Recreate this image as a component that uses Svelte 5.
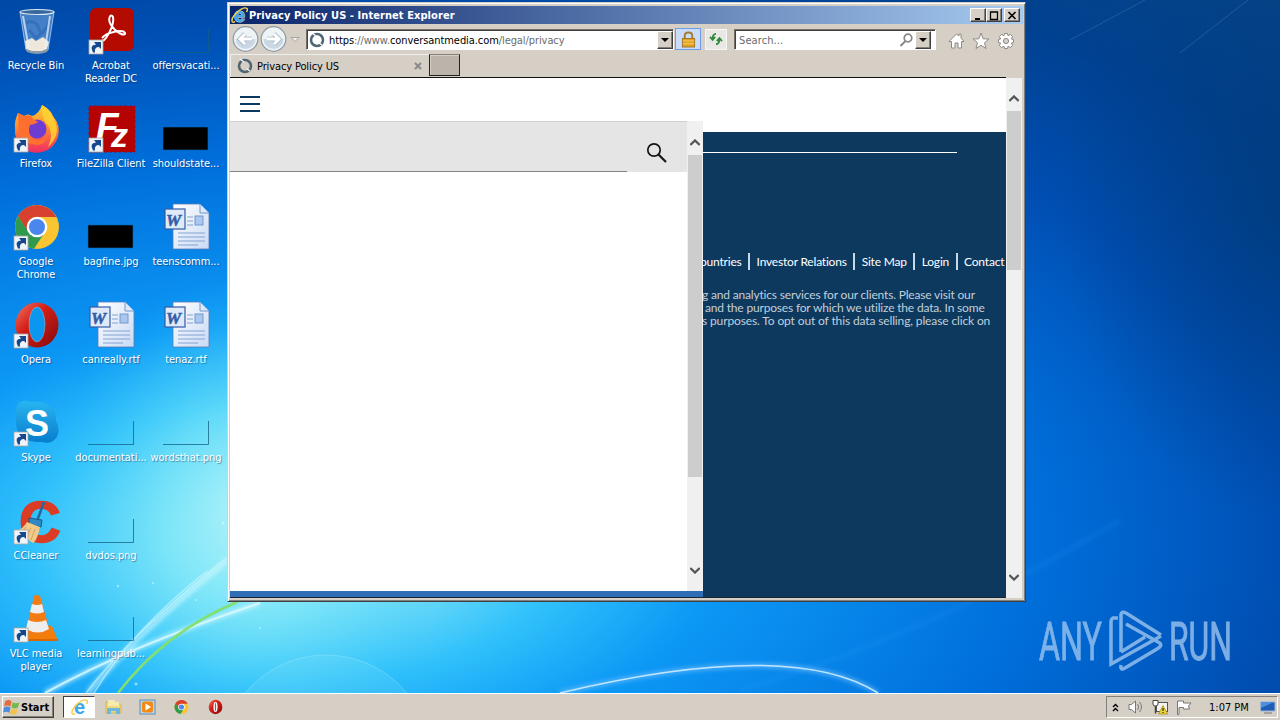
<script lang="ts">
	type Shortcut = { icon: string; label: string; link?: boolean };

	// Listed column by column, seven rows to a column
	const shortcuts: Shortcut[] = [
		{ icon: 'bin', label: 'Recycle Bin' },
		{ icon: 'firefox', label: 'Firefox', link: true },
		{ icon: 'chrome', label: 'Google Chrome', link: true },
		{ icon: 'opera', label: 'Opera', link: true },
		{ icon: 'skype', label: 'Skype', link: true },
		{ icon: 'ccleaner', label: 'CCleaner', link: true },
		{ icon: 'vlc', label: 'VLC media player', link: true },
		{ icon: 'acrobat', label: 'Acrobat Reader DC', link: true },
		{ icon: 'filezilla', label: 'FileZilla Client', link: true },
		{ icon: 'black', label: 'bagfine.jpg' },
		{ icon: 'word', label: 'canreally.rtf' },
		{ icon: 'empty', label: 'documentati...' },
		{ icon: 'empty', label: 'dvdos.png' },
		{ icon: 'empty', label: 'learningpub...' },
		{ icon: 'empty', label: 'offersvacati...' },
		{ icon: 'black', label: 'shouldstate...' },
		{ icon: 'word', label: 'teenscomm...' },
		{ icon: 'word', label: 'tenaz.rtf' },
		{ icon: 'empty', label: 'wordsthat.png' }
	];

	const footerLinks = ['ountries', 'Investor Relations', 'Site Map', 'Login', 'Contact'];

	let time = $state('1:07 PM');
</script>

{#snippet chrome()}
	<circle cx="25" cy="25" r="22" fill="#fbc531" />
	<path d="M25 25 L5.9 14 A22 22 0 0 1 44.5 15 L25 15 Z" fill="#d8402f" />
	<path d="M6 14 L16.5 31 L25 24 L25 15 Z" fill="#d8402f" />
	<path d="M6 14 A22 22 0 0 0 22 46.8 L33 30 L25 32 L16.5 30 Z" fill="#2f9a4d" />
	<circle cx="25" cy="25" r="10.3" fill="#fff" />
	<circle cx="25" cy="25" r="8" fill="#4a86ee" />
{/snippet}

{#snippet opera()}
	<ellipse cx="25" cy="25" rx="21.5" ry="22.5" fill="url(#red)" />
{/snippet}

{#snippet ie()}
	<text class="ie-letter" x="3" y="14.5">e</text>
	<path d="M4 14.500 C0 17 0 12 3.500 8 C7 3 14 -.5 16 1.500 C17 2.500 16 4 15.500 5" fill="none" stroke="#efd04f" stroke-width="1.500" />
{/snippet}

{#snippet icon(name: string)}
	{#if name === 'bin'}
		<path d="M8 6 L14 44 Q25 50 36 44 L42 6 Z" fill="#a9cdf0" fill-opacity=".4" stroke="#c8def4" stroke-opacity=".7" />
		<path d="M13 35 L20 32 L24 35 L31 31 L37 36 L35 43 Q25 48 14 43 Z" fill="#eee7da" />
		<path d="M14 17 Q24 13 27 23 T38 14 M17 24 L24 32 L34 23" fill="none" stroke="#2c65b4" stroke-width="3" opacity=".6" />
		<path d="M11 10 L17 43 M38 10 L33 43" stroke="#e8f4ff" stroke-width="2" opacity=".7" />
		<path d="M14 43 Q25 48 36 43 L35 46 Q25 50 15 46 Z" fill="#8b98a4" />
		<ellipse cx="25" cy="6" rx="17" ry="2.5" fill="#38689e" stroke="#dce8f2" stroke-width="1.200" />
	{:else if name === 'firefox'}
		<path d="M6 9 L12 12 Q16 9 20 12 Q27 10 30 1 Q39 6 41 12 L45 18 A22 22 0 1 1 3 24 Q2 18 6 9 Z" fill="url(#fire)" />
		<circle cx="25" cy="25" r="9.5" fill="#6f3cd1" />
		<path d="M6 9 L12 12 Q19 10 20 14 L26 18 Q22 21 18 21 Q15 28 20 34 Q29 40 36 30 Q35 39 26 41 Q12 41 7 30 Z" fill="#ff7030" />
		<path d="M30 1 Q38 5 42 15 Q50 30 36 43 Q42 31 36 21 Q29 16 30 1" fill="#ffd431" opacity=".85" />
	{:else if name === 'chrome'}
		{@render chrome()}
	{:else if name === 'opera'}
		{@render opera()}
		<ellipse cx="25" cy="24.500" rx="8" ry="17.500" fill="#0b96f0" stroke="#fff" stroke-opacity=".4" stroke-width=".7" />
	{:else if name === 'skype'}
		<path d="M4 15 C3 3 12 1 19 4 C34 2 45 9 44 23 C51 35 43 48 30 44 C14 45 4 38 4 24 Z" fill="url(#sky)" />
		<text class="skype-letter" x="13" y="37.5">S</text>
	{:else if name === 'ccleaner'}
		<text class="cc-letter" x="7" y="45.500">C</text>
		<path d="M32 6 L25 25" stroke="#2368a2" stroke-width="2.5" />
		<path d="M17 22 L30 24 L29 31 L17 28 Z" fill="#3189c4" stroke="#19598c" />
		<path d="M15 26 L28 31 Q25 45 21 47 L4 35 Q11 33 15 26" fill="#f3c988" />
		<path d="M14 31 L9 38 M19 32 L14 42 M23 33 L19 44" stroke="#c88d4f" stroke-width=".7" />
	{:else if name === 'vlc'}
		<path d="M15 32 H40 L46 47 H10 Z" fill="#f27d0b" />
		<path d="M10 45 H46 V47 H10 Z" fill="#da6504" />
		<path d="M22 2 Q25 0 28 2 L38 37 Q26 45 14 37 Z" fill="#f37b13" />
		<path d="M20 10 Q25 12 30 10 L32 18 Q25 21 18 18 Z M16 26 Q25 30 34 26 L37 35 Q26 42 14 35 Z" fill="#eee" />
	{:else if name === 'acrobat'}
		<rect x="3" y="2" width="44" height="43" rx="6" fill="#b30b00" />
		<path d="M14 34 C17 39 28 19 26 11 C24 7 20 12 24 19 C29 27 39 31 38 27 C36 23 20 26 15 32" fill="none" stroke="#fff" stroke-width="2" />
	{:else if name === 'filezilla'}
		<rect x="2" y="2" width="46" height="46" fill="#b50303" stroke="#951023" stroke-dasharray="3 2" />
		<text class="fz" x="9" y="35">F<tspan class="fz-z" x="24" y="43">z</tspan></text>
	{:else if name === 'black'}
		<path d="M1 23 H46 V46 H1 Z" fill="#000" stroke="#0a64b2" stroke-width=".6" />
	{:else if name === 'word'}
		<path d="M11 2 H38 L47 11 V47 H11 Z" fill="url(#paper)" stroke="#587cb8" stroke-width=".8" />
		<path d="M38 2 V11 H47" fill="#dce9fa" stroke="#7398cc" />
		<path d="M25 15 H31 M25 19 H31 M25 23 H31 M16 31 H43 M16 35 H43 M16 39 H43 M16 43 H36" stroke="#83a3d4" />
		<rect x="33" y="14" width="8" height="9" fill="#aac7ef" stroke="#7398cc" />
		<rect x="3" y="7" width="20" height="20" fill="#dfe9f8" stroke="#315da7" stroke-width="1.200" />
		<text class="word-letter" x="4" y="23.5">W</text>
	{:else}
		<path d="M1 46.5 H46.5 V23" fill="none" stroke="#145f83" stroke-opacity=".75" />
	{/if}
{/snippet}

{#snippet ring()}
	<svg class="ring" viewBox="0 0 16 16"><circle cx="8" cy="8" r="6" fill="none" stroke="#506773" stroke-width="2.600" /><path d="M3 1 L7 4 M13 13 L10 11" stroke="#fff" stroke-width="1.300" /></svg>
{/snippet}

{#snippet chevron(down: boolean)}
	<svg class="chevron" class:down viewBox="0 0 10 7"><path d="M.3 6 L5 1.500 L9.700 6" fill="none" stroke="#555" stroke-width="2.300" /></svg>
{/snippet}

<div class="screen">
	<main class="desktop">
		<svg class="wallpaper" viewBox="0 0 1280 693" preserveAspectRatio="none">
			<defs>
				<radialGradient id="sea" gradientUnits="userSpaceOnUse" cx="0" cy="0" r="1.500" gradientTransform="translate(300 540) scale(1000 520)">
					<stop offset="0" stop-color="#a6ebf7" />
					<stop offset=".08" stop-color="#80e2f8" />
					<stop offset=".18" stop-color="#30c1fb" />
					<stop offset=".28" stop-color="#0c98f5" />
					<stop offset=".49" stop-color="#006fdb" />
					<stop offset=".66" stop-color="#004eb2" />
					<stop offset=".82" stop-color="#004190" />
					<stop offset="1" stop-color="#084686" />
				</radialGradient>
				<radialGradient id="glow"><stop offset="0" stop-color="#b5f3f9" stop-opacity=".95" /><stop offset=".45" stop-color="#7ce8f8" stop-opacity=".6" /><stop offset="1" stop-color="#31c9fa" stop-opacity="0" /></radialGradient>
				<radialGradient id="shade"><stop offset="0" stop-color="#003a78" stop-opacity=".75" /><stop offset="1" stop-color="#003a80" stop-opacity="0" /></radialGradient>
				<linearGradient id="fire" x2="0" y2="1"><stop stop-color="#ffcf31" /><stop offset=".5" stop-color="#ff8432" /><stop offset="1" stop-color="#f02b67" /></linearGradient>
				<linearGradient id="red" x2="1" y2="1"><stop stop-color="#f17766" /><stop offset=".4" stop-color="#d51f16" /><stop offset="1" stop-color="#80090b" /></linearGradient>
				<linearGradient id="sky" x2="0" y2="1"><stop stop-color="#28b5f1" /><stop offset="1" stop-color="#087dcc" /></linearGradient>
				<linearGradient id="paper" x2="1" y2="1"><stop stop-color="#fff" /><stop offset="1" stop-color="#c9daf4" /></linearGradient>
				<filter id="soft"><feGaussianBlur stdDeviation="2" /></filter>
			</defs>
			<rect width="1280" height="693" fill="url(#sea)" />
			<ellipse cx="250" cy="515" rx="200" ry="240" fill="url(#glow)" />
			<ellipse cx="1290" cy="200" rx="230" ry="320" fill="url(#shade)" />
			<circle cx="326" cy="760" r="105" fill="#9ce8f8" fill-opacity=".15" stroke="#a8edfa" stroke-opacity=".35" />
			<g fill="none">
				<g filter="url(#soft)" stroke="#d9faff" stroke-width="5" opacity=".65">
					<path d="M45 693 Q130 646 260 603" />
					<path d="M88 693 Q135 635 228 560" />
					<path d="M560 693 Q790 638 878 693" stroke="#71bdff" />
				</g>
				<path d="M45 693 Q130 646 260 603" stroke="#d9faff" stroke-width="2" opacity=".8" />
				<path d="M86 693 Q130 635 228 557 M94 693 Q132 630 207 571" stroke="#c8f5fd" stroke-width="1.200" opacity=".7" />
				<path d="M118 693 Q165 632 237 602" stroke="#83df70" stroke-width="2.500" />
				<path d="M560 693 Q790 638 878 693" stroke="#bfe6ff" stroke-width="1.500" />
				<path d="M1180 53 L1248 0 M1070 40 L1145 0" stroke="#6c96bd" opacity=".3" />
				<path d="M740 690 Q930 635 1120 520" filter="url(#soft)" stroke="#41a7ff" stroke-width="5" opacity=".12" />
			</g>
			<g fill="#d8faff" opacity=".6"><circle cx="118" cy="586" r="1.200" /><circle cx="153" cy="583" r="1" /><circle cx="136" cy="684" r="1.500" /><circle cx="223" cy="523" r="1.500" /><circle cx="196" cy="600" r="1" /><circle cx="260" cy="628" r="1" /></g>
			<g class="watermark">
				<text x="1039" y="660" textLength="63" lengthAdjust="spacingAndGlyphs">ANY</text>
				<text x="1169" y="660" textLength="63" lengthAdjust="spacingAndGlyphs">RUN</text>
				<path d="M1121 652 V614 Q1122 611 1126 613 L1161 635 M1118 618 H1113 Q1111 619 1111 622 V664 L1120 659 L1161 636 M1126 624 L1158 642 Q1164 645 1157 649 L1125 668 Q1120 671 1121 665 M1121 652 L1145 637" />
			</g>
		</svg>

		<div class="shortcuts">
			{#each shortcuts as item}
				<div class="shortcut">
					<svg class="shortcut-icon" viewBox="0 0 48 48">
						{@render icon(item.icon)}
						{#if item.link}
							<rect x="2" y="34" width="14" height="14" fill="#eef4fb" stroke="#aaa6a0" stroke-width=".8" />
							<path d="M6 46.500 Q2 39 9 38.500 L7 36 H14 V43 L12 41 Q7 41 8 46.500 Z" fill="#16488b" />
						{/if}
					</svg>
					<span class="label">{item.label}</span>
				</div>
			{/each}
		</div>

		<section class="window">
			<header class="titlebar">
				<svg class="ie-icon" viewBox="0 0 17 16">{@render ie()}</svg>
				<span class="title">Privacy Policy US - Internet Explorer</span>
				<div class="caption">
					<button class="raised" aria-label="Minimize"><svg viewBox="0 0 12 11"><path d="M3 9 H8" stroke="#000" stroke-width="2" /></svg></button>
					<button class="raised" aria-label="Maximize"><svg viewBox="0 0 12 11"><path d="M2.500 2 H9.500 V9.500 H2.500 Z M2 2 H10" fill="none" stroke="#000" stroke-width="1.300" /></svg></button>
					<button class="raised close" aria-label="Close"><svg viewBox="0 0 12 11"><path d="M2.500 2 L9.500 9 M9.500 2 L2.500 9" stroke="#000" stroke-width="1.600" /></svg></button>
				</div>
			</header>

			<div class="toolbar">
				<svg class="nav" viewBox="0 0 72 28">
					<g fill="#eef3f6" stroke="#8f99a2" stroke-width="1.200"><circle cx="15.500" cy="14" r="12.300" /><circle cx="43.500" cy="14" r="12.300" /></g>
					<g fill="#c9d8e4"><path d="M5.500 14 A10 10 0 0 0 25.500 14 Z" /><path d="M33.500 14 A10 10 0 0 0 53.500 14 Z" /></g>
					<g fill="none" stroke="#a9b7c3" stroke-width="4.600"><path d="M22 14 H10 M15 9 L10 14 L15 19" /><path d="M37 14 H49 M44 9 L49 14 L44 19" /></g>
					<g fill="none" stroke="#fff" stroke-width="3"><path d="M22 14 H10 M15 9 L10 14 L15 19" /><path d="M37 14 H49 M44 9 L49 14 L44 19" /></g>
					<path d="M61 12.500 H69 L65 16.500 Z" fill="#eee" stroke="#aaa49c" />
				</svg>
				<div class="field address">
					{@render ring()}
					<span class="url"><b>https</b>://www.<b>conversantmedia.com</b>/legal/privacy</span>
					<button class="raised drop" aria-label="History"><i></i></button>
				</div>
				<div class="lock"><svg viewBox="0 0 16 18"><path d="M4 9 V5 Q4 1.500 8 1.500 T12 5 V9" fill="none" stroke="#a17c32" stroke-width="2" /><rect x="1.500" y="8" width="13" height="9" fill="#e4a323" stroke="#9e7421" /><path d="M2 10.500 H14 M2 13.500 H14" stroke="#f7ce64" /></svg></div>
				<div class="refresh"><svg viewBox="0 0 16 14"><path d="M8 1 Q4 1 4 7 M1 4.500 L4 8 L7 4.500 M8 13 Q12 13 12 7 M9 9.500 L12 6 L15 9.500" fill="none" stroke="#308a3c" stroke-width="2" /></svg></div>
				<div class="field search">
					<span>Search...</span>
					<svg viewBox="0 0 14 14"><circle cx="9" cy="5" r="3.800" fill="none" stroke="#888" stroke-width="1.700" /><path d="M6.500 8 L1.500 13" stroke="#888" stroke-width="2" /></svg>
					<button class="raised drop" aria-label="Search options"><i></i></button>
				</div>
				<svg class="tools" viewBox="0 0 66 18">
					<g fill="#fff" stroke="#8f8a84">
						<path d="M1 9.500 L8.500 2 L11 4 V2 H13 V6 L16 9.500 H13.500 V16 H10 V11 H7 V16 H3.500 V9.500 Z" />
						<path d="M33 1 L35.200 6.800 L41 7 L36.500 10.700 L38 16.500 L33 13.300 L28 16.500 L29.500 10.700 L25 7 L30.800 6.800 Z" />
						<path d="M56.500 1.500 H59.500 L60 3.700 L62.500 2.500 L64.600 4.600 L63.400 7 L65.500 7.500 V10.500 L63.400 11 L64.600 13.400 L62.500 15.500 L60 14.300 L59.500 16.500 H56.500 L56 14.300 L53.500 15.500 L51.400 13.400 L52.600 11 L50.500 10.500 V7.500 L52.600 7 L51.400 4.600 L53.500 2.500 L56 3.700 Z" />
						<circle cx="58" cy="9" r="2.600" fill="#d5cfc6" />
					</g>
				</svg>
			</div>

			<div class="tabs">
				<div class="tab">{@render ring()}<span>Privacy Policy US</span><svg class="tab-close" viewBox="0 0 8 8"><path d="M1 1 L7 7 M7 1 L1 7" stroke="#888" stroke-width="1.800" /></svg></div>
				<div class="new-tab"></div>
			</div>

			<div class="viewport">
				<div class="page">
					<div class="page-header"><svg viewBox="0 0 20 16"><path d="M0 1 H20 M0 8 H20 M0 15 H20" stroke="#0d395f" stroke-width="2" /></svg></div>
					<div class="columns">
						<div class="drawer">
							<div class="drawer-body">
								<div class="drawer-page">
									<div class="site-search">
										<div class="site-input"></div>
										<svg viewBox="0 0 22 22"><circle cx="8" cy="8" r="6.200" fill="none" stroke="#151515" stroke-width="1.700" /><path d="M12.500 12.500 L20 20" stroke="#151515" stroke-width="2.200" /></svg>
									</div>
								</div>
								<div class="scrollbar inner">{@render chevron(false)}<div class="thumb"></div>{@render chevron(true)}</div>
							</div>
							<div class="strip"></div>
						</div>
						<footer class="footer">
							<div class="rule"></div>
							<nav>
								{#each footerLinks as link}
									<span class="footer-link">{link}</span>
								{/each}
							</nav>
							<p><span class="l1">g and analytics services for our clients. Please visit our</span><span class="l2">and the purposes for which we utilize the data. In some</span><span class="l3">s purposes. To opt out of this data selling, please click on</span></p>
						</footer>
					</div>
				</div>
				<div class="scrollbar outer">{@render chevron(false)}<div class="thumb"></div>{@render chevron(true)}</div>
			</div>
		</section>
	</main>

	<div class="taskbar">
		<button class="raised start">
			<svg viewBox="0 0 16 15"><path d="M2 2 Q5 0 8 2 L7 7 Q4 5 1 7 Z" fill="#e56c3d" /><path d="M9 3 Q12 5 15.500 3 L14 8 Q11 10 8 8 Z" fill="#78b94b" /><path d="M1 8 Q4 6 7 8 L6 13 Q3 11 0 13 Z" fill="#4c8cda" /><path d="M8 9 Q11 11 14 9 L12.500 14 Q10 15.500 6.500 13.500 Z" fill="#f3c247" /></svg>
			Start
		</button>
		<div class="task active"><svg viewBox="0 0 17 16">{@render ie()}</svg></div>
		<div class="task"><svg viewBox="0 0 17 16"><path d="M1 3 H6 L8 5 H16 V14 H1 Z" fill="#efd77c" stroke="#c9a94d" stroke-width=".7" /><path d="M3 1 H9 L10 3 H14 V7 H3 Z" fill="#f7eaae" /><path d="M2 9 H15 V15 H11 V12 H6 V15 H2 Z" fill="#6db7dc" /></svg></div>
		<div class="task"><svg viewBox="0 0 17 16"><rect x="1" y="1" width="15" height="14" fill="#b9d9ef" stroke="#608bb5" /><rect x="3" y="2.500" width="11" height="11" rx="2" fill="#f28b15" /><path d="M6.500 4.500 L12 8 L6.500 11.500 Z" fill="#fff" /></svg></div>
		<div class="task"><svg viewBox="0 0 50 50">{@render chrome()}</svg></div>
		<div class="task"><svg viewBox="0 0 50 50">{@render opera()}<ellipse cx="25" cy="25" rx="6.500" ry="16" fill="#fff" /><ellipse cx="25" cy="25" rx="2" ry="13" fill="#d3463a" /></svg></div>
		<div class="tray">
			<svg class="more" viewBox="0 0 7 9"><path d="M1 4 L3.500 1.500 L6 4 M1 8 L3.500 5.500 L6 8" fill="none" stroke="#000" stroke-width="1.400" /></svg>
			<svg class="tray-icon" viewBox="0 0 16 16"><path d="M1 5.500 H3.500 L7.500 2 V14 L3.500 10.500 H1 Z" fill="#fff" stroke="#777" /><path d="M9.500 5 Q12 8 9.500 11 M11.500 3 Q15.500 8 11.500 13" fill="none" stroke="#777" /></svg>
			<svg class="tray-icon" viewBox="0 0 16 16"><rect x="4.500" y="3.500" width="11" height="9" fill="#f3f3ef" stroke="#555" /><path d="M1 1.500 H6 V5 Q6 7 3.500 7 T1 5 Z" fill="#fff" stroke="#444" /><path d="M3.500 7 V14.500" stroke="#444" stroke-width="1.500" /><path d="M11 6.500 L15.500 15 H6.500 Z" fill="#f8d62b" stroke="#9b8420" stroke-width=".7" /><path d="M11 9 V12 M11 13 V14" stroke="#000" /></svg>
			<svg class="tray-icon" viewBox="0 0 16 16"><path d="M1.500 15.500 V2 H7.500 V4 H15 L12.500 7 L13.500 10 H7.500 V8.500 H3 V15.500 Z" fill="#fff" stroke="#777" /></svg>
			<span class="time">{time}</span>
			<svg class="monitor" viewBox="0 0 16 13"><path d="M.5 1 H15 V10 H.5 Z" fill="#1e5cb5" stroke="#9bb5d4" /><path d="M1 1 L14 1 L1 7 Z" fill="#4e90dd" /><path d="M4 12 H12" stroke="#777" /></svg>
		</div>
	</div>
</div>

<style>
	:global(body) {
		margin: 0;
		overflow: hidden;
	}

	.screen {
		width: 1280px;
		height: 720px;
		display: flex;
		flex-direction: column;
		overflow: hidden;
		color: #000;
		font: 11px/13px 'DejaVu Sans Condensed', 'DejaVu Sans', sans-serif;
		font-stretch: condensed;
	}

	.screen * {
		box-sizing: border-box;
	}

	svg {
		display: block;
		flex: none;
	}

	button {
		font: inherit;
		padding: 0;
	}

	.desktop {
		position: relative;
		height: 692px;
		background: #006fdb;
	}

	.wallpaper {
		position: absolute;
		inset: 0;
		width: 1280px;
		height: 693px;
	}

	.watermark text {
		font: 400 53px Roboto, sans-serif;
		fill: #9bc4ef;
		stroke: #9bc4ef;
		stroke-width: 0.9;
		opacity: 0.8;
	}

	.watermark path {
		fill: none;
		stroke: #9bc4ef;
		stroke-opacity: 0.8;
		stroke-width: 3.5;
	}

	/* Desktop shortcuts */
	.shortcuts {
		position: relative;
		display: grid;
		grid-template-rows: repeat(7, 98px);
		grid-auto-flow: column;
		grid-auto-columns: 75px;
		width: 225px;
		padding-top: 6px;
		margin-left: -2px;
	}

	.shortcut {
		display: flex;
		flex-direction: column;
		align-items: center;
	}

	.shortcut-icon {
		width: 48px;
		height: 48px;
		overflow: visible;
	}

	.label {
		margin-top: 5px;
		margin-left: 1px;
		max-width: 75px;
		text-align: center;
		color: #fff;
		text-shadow: 1px 1px 1px rgba(0, 30, 80, 0.45);
		letter-spacing: -0.05px;
	}

	.ie-letter {
		font: 700 20px 'Liberation Sans', sans-serif;
		fill: #3fa5ea;
		stroke: #e5f5ff;
		stroke-width: 0.8;
		paint-order: stroke;
	}

	.skype-letter {
		font: 700 36px 'Liberation Sans', sans-serif;
		fill: #fff;
	}

	.cc-letter {
		font: 700 58px 'Liberation Sans', sans-serif;
		fill: #dc3c24;
		stroke: #dc3c24;
		stroke-width: 1.5;
	}

	.fz {
		font: italic 700 37px 'Liberation Sans', sans-serif;
		fill: #fff;
	}

	.fz-z {
		font-size: 34px;
	}

	.word-letter {
		font: italic 700 17px 'Liberation Serif', serif;
		fill: #315da7;
		stroke: #315da7;
		stroke-width: 0.5;
	}

	/* Window frame */
	.window {
		position: absolute;
		left: 227px;
		top: 2px;
		width: 799px;
		height: 600px;
		padding: 3px 2px 2px 1px;
		background: #d5cfc6;
		border: 1px solid #d5cfc6;
		border-right-color: #404040;
		border-bottom-color: #404040;
		box-shadow: inset 1px 1px #fff, inset -1px -1px #808080;
		display: flex;
		flex-direction: column;
	}

	.raised {
		background: #d5cfc6;
		border: 1px solid;
		border-color: #fff #404040 #404040 #fff;
		box-shadow: inset -1px -1px #85807a;
	}

	.titlebar {
		display: flex;
		align-items: center;
		height: 18px;
		margin-left: 1px;
		padding: 0 3px 0 1px;
		background: linear-gradient(90deg, #0a246a, #a6caf0);
	}

	.ie-icon {
		width: 17px;
		height: 16px;
	}

	.title {
		margin-left: 1px;
		color: #fff;
		font-weight: 700;
		letter-spacing: 0.07px;
	}

	.caption {
		display: flex;
		margin-left: auto;
	}

	.caption button {
		width: 16px;
		height: 14px;
	}

	.caption .close {
		margin-left: 2px;
	}

	.caption svg {
		width: 12px;
		height: 11px;
		margin-left: 1px;
	}

	.toolbar {
		display: flex;
		align-items: center;
		height: 30px;
		margin-left: 1px;
	}

	.nav {
		width: 72px;
		height: 28px;
	}

	.field {
		display: flex;
		align-items: center;
		height: 21px;
		background: #fff;
		border: 1px solid #fff;
		border-top-color: #77716a;
		border-left-color: #77716a;
		box-shadow: inset 1px 1px #404040;
	}

	.address {
		width: 368px;
		margin-left: 4px;
		padding: 1px 0 0 2px;
	}

	.ring {
		width: 16px;
		height: 16px;
	}

	.url {
		margin: 1px 0 0 4px;
		color: #6b6b6b;
		letter-spacing: -0.08px;
	}

	.url b {
		color: #000;
		font-weight: 400;
	}

	.drop {
		width: 16px;
		height: 18px;
		margin-left: auto;
		display: flex;
		align-items: center;
		justify-content: center;
	}

	.drop i {
		border: 4px solid transparent;
		border-top-color: #000;
		border-bottom: 0;
	}

	.lock {
		width: 26px;
		height: 22px;
		margin-left: 1px;
		background: #cbdcfa;
		border: 1px solid #6e9ee7;
		display: flex;
		align-items: center;
		justify-content: center;
	}

	.lock svg {
		width: 15px;
		height: 17px;
	}

	.refresh {
		width: 22px;
		height: 21px;
		margin-left: 4px;
		background: #e9e8e4;
		border: 1px solid #f6f6f4;
		display: flex;
		align-items: center;
		justify-content: center;
	}

	.refresh svg {
		width: 14px;
		height: 12px;
	}

	.search {
		width: 202px;
		margin-left: 7px;
		padding: 1px 4px 0 4px;
		color: #6b6b6b;
	}

	.search span {
		margin-top: 1px;
		letter-spacing: 0.1px;
	}

	.search svg {
		width: 14px;
		height: 14px;
		margin-left: auto;
	}

	.search .drop {
		margin-left: 2px;
	}

	.tools {
		width: 66px;
		height: 18px;
		margin: 3px 0 0 12px;
	}

	.tabs {
		display: flex;
		height: 24px;
		margin-left: 1px;
		width: 776px;
		border-bottom: 1px solid #111;
	}

	.tab {
		display: flex;
		align-items: center;
		width: 199px;
		height: 23px;
		padding: 0 7px 0 6px;
		border-left: 1px solid #eee;
		border-top: 1px solid #eee;
	}

	.tab span {
		margin-left: 4px;
		letter-spacing: -0.12px;
	}

	.tab-close {
		width: 8px;
		height: 8px;
		margin-left: auto;
	}

	.new-tab {
		width: 31px;
		height: 22px;
		background: #bbb4ab;
		border: 1px solid;
		border-color: #85807a #222 #222;
		box-shadow: inset 1px 1px #d5cfc6;
	}

	/* Web page */
	.viewport {
		display: flex;
		height: 520px;
		margin-left: 1px;
	}

	.page {
		width: 776px;
		background: #fff;
		overflow: hidden;
		border-bottom: 1px solid #14283a;
	}

	.page-header {
		height: 43px;
		padding: 18px 0 0 10px;
	}

	.page-header svg {
		width: 20px;
		height: 16px;
	}

	.columns {
		display: flex;
		height: 477px;
	}

	.drawer {
		width: 473px;
		flex: none;
	}

	.drawer-body {
		display: flex;
		height: 470px;
	}

	.drawer-page {
		width: 457px;
	}

	.site-search {
		display: flex;
		height: 51px;
		background: #e5e5e5;
		border-top: 1px solid #d0d0d0;
	}

	.site-input {
		width: 397px;
		border-bottom: 1px solid #858585;
	}

	.site-search svg {
		width: 22px;
		height: 22px;
		margin: 20px 0 0 19px;
	}

	.strip {
		height: 7px;
		background: #2f6db5;
	}

	.scrollbar {
		display: flex;
		flex-direction: column;
		align-items: center;
		width: 16px;
		background: #f0f0f0;
	}

	.thumb {
		width: 14px;
		background: #cdcdcd;
	}

	.chevron {
		width: 10px;
		height: 7px;
	}

	.down {
		transform: rotate(180deg);
		margin-top: auto;
	}

	.inner {
		padding: 18px 0 17px;
	}

	.inner .thumb {
		height: 322px;
		margin-top: 9px;
	}

	.outer {
		padding: 17px 0 17px;
	}

	.outer .thumb {
		height: 159px;
		margin-top: 9px;
	}

	.footer {
		width: 303px;
		margin-top: 11px;
		height: 466px;
		background: #0d395f;
		color: #fff;
		overflow: hidden;
		font: 12px/13px Lato, sans-serif;
		font-stretch: normal;
	}

	.rule {
		width: 254px;
		height: 21px;
		border-bottom: 1px solid #fff;
	}

	.footer nav {
		display: flex;
		margin: 100px 0 0 -3px;
		white-space: nowrap;
		letter-spacing: -0.2px;
	}

	.footer-link {
		padding-right: 6.6px;
		margin-right: 6.4px;
		border-right: 2px solid #c4dae8;
		line-height: 17px;
	}

	.footer-link:last-child {
		border: 0;
	}

	.footer p {
		margin: 18px 0 0 -1px;
		color: #c1cfd9;
		white-space: nowrap;
		letter-spacing: -0.18px;
	}

	.footer p span {
		display: block;
	}

	.l2 {
		padding-left: 3px;
	}

	.footer .l3 {
		letter-spacing: -0.13px;
	}

	/* Taskbar */
	.taskbar {
		display: flex;
		height: 28px;
		padding: 3px 2px 0;
		background: #d5cfc6;
		border-top: 1px solid #d5cfc6;
		box-shadow: inset 0 1px #fff;
	}

	.start {
		display: flex;
		align-items: center;
		gap: 1px;
		width: 52px;
		height: 22px;
		margin-right: 9px;
		font-weight: 700;
	}

	.start svg {
		width: 17px;
		height: 16px;
	}

	.task {
		display: flex;
		align-items: center;
		justify-content: center;
		width: 32px;
		height: 22px;
		margin-right: 2px;
	}

	.task svg {
		width: 17px;
		height: 16px;
	}

	.active {
		background: #fff;
		border: 1px solid;
		border-color: #404040 #fff #fff #404040;
	}

	.tray {
		display: flex;
		align-items: center;
		width: 172px;
		height: 22px;
		margin-left: auto;
		padding-left: 5px;
		border: 1px solid;
		border-color: #85807a #fff #fff #85807a;
	}

	.more {
		width: 7px;
		height: 9px;
		margin-right: 9px;
	}

	.tray-icon {
		width: 16px;
		height: 16px;
		margin-right: 8px;
	}

	.time {
		margin: 0 auto 0 9px;
		white-space: nowrap;
	}

	.monitor {
		width: 16px;
		height: 13px;
		margin-right: 1px;
	}
</style>
